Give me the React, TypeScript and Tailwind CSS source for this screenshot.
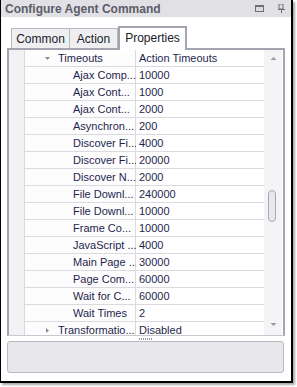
import React from 'react';

const rows: { name: string; value: string; kind?: 'open' | 'closed' }[] = [
  { name: 'Timeouts', value: 'Action Timeouts', kind: 'open' },
  { name: 'Ajax Comp...', value: '10000' },
  { name: 'Ajax Cont...', value: '1000' },
  { name: 'Ajax Cont...', value: '2000' },
  { name: 'Asynchron...', value: '200' },
  { name: 'Discover Fi...', value: '4000' },
  { name: 'Discover Fi...', value: '20000' },
  { name: 'Discover N...', value: '2000' },
  { name: 'File Downl...', value: '240000' },
  { name: 'File Downl...', value: '10000' },
  { name: 'Frame Co...', value: '10000' },
  { name: 'JavaScript ...', value: '4000' },
  { name: 'Main Page ...', value: '30000' },
  { name: 'Page Com...', value: '60000' },
  { name: 'Wait for C...', value: '60000' },
  { name: 'Wait Times', value: '2' },
  { name: 'Transformatio...', value: 'Disabled', kind: 'closed' },
];

function TitleBar() {
  return (
    <div className="h-[17px] bg-[#e1e1e5] flex items-center pl-[4px] pr-[6px]">
      <span className="text-[12px] font-bold text-[#5c5c68] leading-none">Configure Agent Command</span>
      <div className="ml-auto flex items-center gap-[14px]">
        <svg width="9" height="7" viewBox="0 0 9 7">
          <rect x="0.5" y="0.5" width="8" height="6" fill="#dcdce0" stroke="#6e6e78" />
          <rect x="0" y="0" width="9" height="2" fill="#6e6e78" />
        </svg>
        <svg width="7" height="9" viewBox="0 0 7 9">
          <rect x="1" y="0" width="4" height="5" fill="none" stroke="#6e6e78" strokeWidth="1" />
          <rect x="0" y="5" width="7" height="1" fill="#6e6e78" />
          <rect x="3" y="6" width="1" height="3" fill="#6e6e78" />
        </svg>
      </div>
    </div>
  );
}

function Tabs() {
  return (
    <div className="h-[22px] flex items-end pl-[4px] text-[12px] text-[#202028]">
      <div className="w-[59px] h-[20px] border border-b-0 border-[#b9b9c2] bg-[#efeff1] flex items-center justify-center pt-[1px]">
        Common
      </div>
      <div className="w-[48px] h-[20px] border border-l-0 border-b-0 border-[#b9b9c2] bg-[#efeff1] flex items-center justify-center pt-[1px]">
        Action
      </div>
      <div className="relative z-10 w-[69px] h-[24px] -mb-[2px] border-2 border-b-0 border-[#a4a4b0] bg-white flex items-center justify-center pb-[3px]">
        Properties
      </div>
    </div>
  );
}

function Row({ name, value, kind }: { name: string; value: string; kind?: 'open' | 'closed' }) {
  return (
    <div className="h-[17px] flex shrink-0">
      <div className="w-[111px] h-full border-b border-r border-[#dadadf] bg-[#fdfdfd] flex items-center">
        {kind ? (
          <div className="flex items-center pl-[19px]">
            <svg width="7" height="7" viewBox="0 0 7 7" className="mr-[7px]">
              {kind === 'open' ? (
                <path d="M1 2 L6 2 L3.5 5 Z" fill="#8a8a96" />
              ) : (
                <path d="M2 1 L5 3.5 L2 6 Z" fill="#8a8a96" />
              )}
            </svg>
            <span className="whitespace-nowrap">{name}</span>
          </div>
        ) : (
          <span className="pl-[48px] whitespace-nowrap">{name}</span>
        )}
      </div>
      <div className="w-[128px] h-full border-b border-[#dadadf] bg-white flex items-center pl-[3px]">
        <span>{value}</span>
      </div>
    </div>
  );
}

function Scrollbar() {
  return (
    <div className="w-[18px] bg-[#f4f4f6] flex flex-col items-center">
      <svg width="7" height="5" viewBox="0 0 7 5" className="mt-[6px]">
        <path d="M0.5 4 L3.5 1 L6.5 4 Z" fill="#9a9aa6" />
      </svg>
      <div className="mt-[129px] ml-[-2px] w-[8px] h-[32px] rounded-[4px] border border-[#a9a9b4] bg-[#e9e9ed]" />
      <svg width="7" height="5" viewBox="0 0 7 5" className="mt-auto mb-[8px]">
        <path d="M0.5 1 L3.5 4 L6.5 1 Z" fill="#9a9aa6" />
      </svg>
    </div>
  );
}

function Grid() {
  return (
    <div className="h-[288px] border-2 border-b border-[#a4a4b0] border-b-[#c8c8d0] flex overflow-hidden text-[11px] text-[#1f1f4e]">
      <div className="w-[16px] bg-[#f2f2f4] border-r border-[#dadadf]" />
      <div className="flex flex-col">
        {rows.map((r, i) => (
          <Row key={i} {...r} />
        ))}
      </div>
      <Scrollbar />
    </div>
  );
}

export default function App() {
  return (
    <div className="w-[297px] h-[387px] bg-white font-['Liberation_Sans',Arial,sans-serif]">
      <div className="w-[293px] h-[383px] flex flex-col bg-white border-l border-r-2 border-b-2 border-black shadow-[2px_2px_2px_rgba(0,0,0,0.35)]">
        <TitleBar />
        <div className="flex-1 flex flex-col px-[6px] pt-[9px]">
          <Tabs />
          <Grid />
          <div className="h-[5px] flex items-center justify-center">
            <div className="w-[14px] h-[2px] bg-[repeating-linear-gradient(90deg,#9a9aa6_0px,#9a9aa6_1px,transparent_1px,transparent_2px)]" />
          </div>
          <div className="h-[32px] mr-[1px] border border-[#b9b9c2] rounded-[3px] bg-[#e8e8ec]" />
        </div>
      </div>
    </div>
  );
}
